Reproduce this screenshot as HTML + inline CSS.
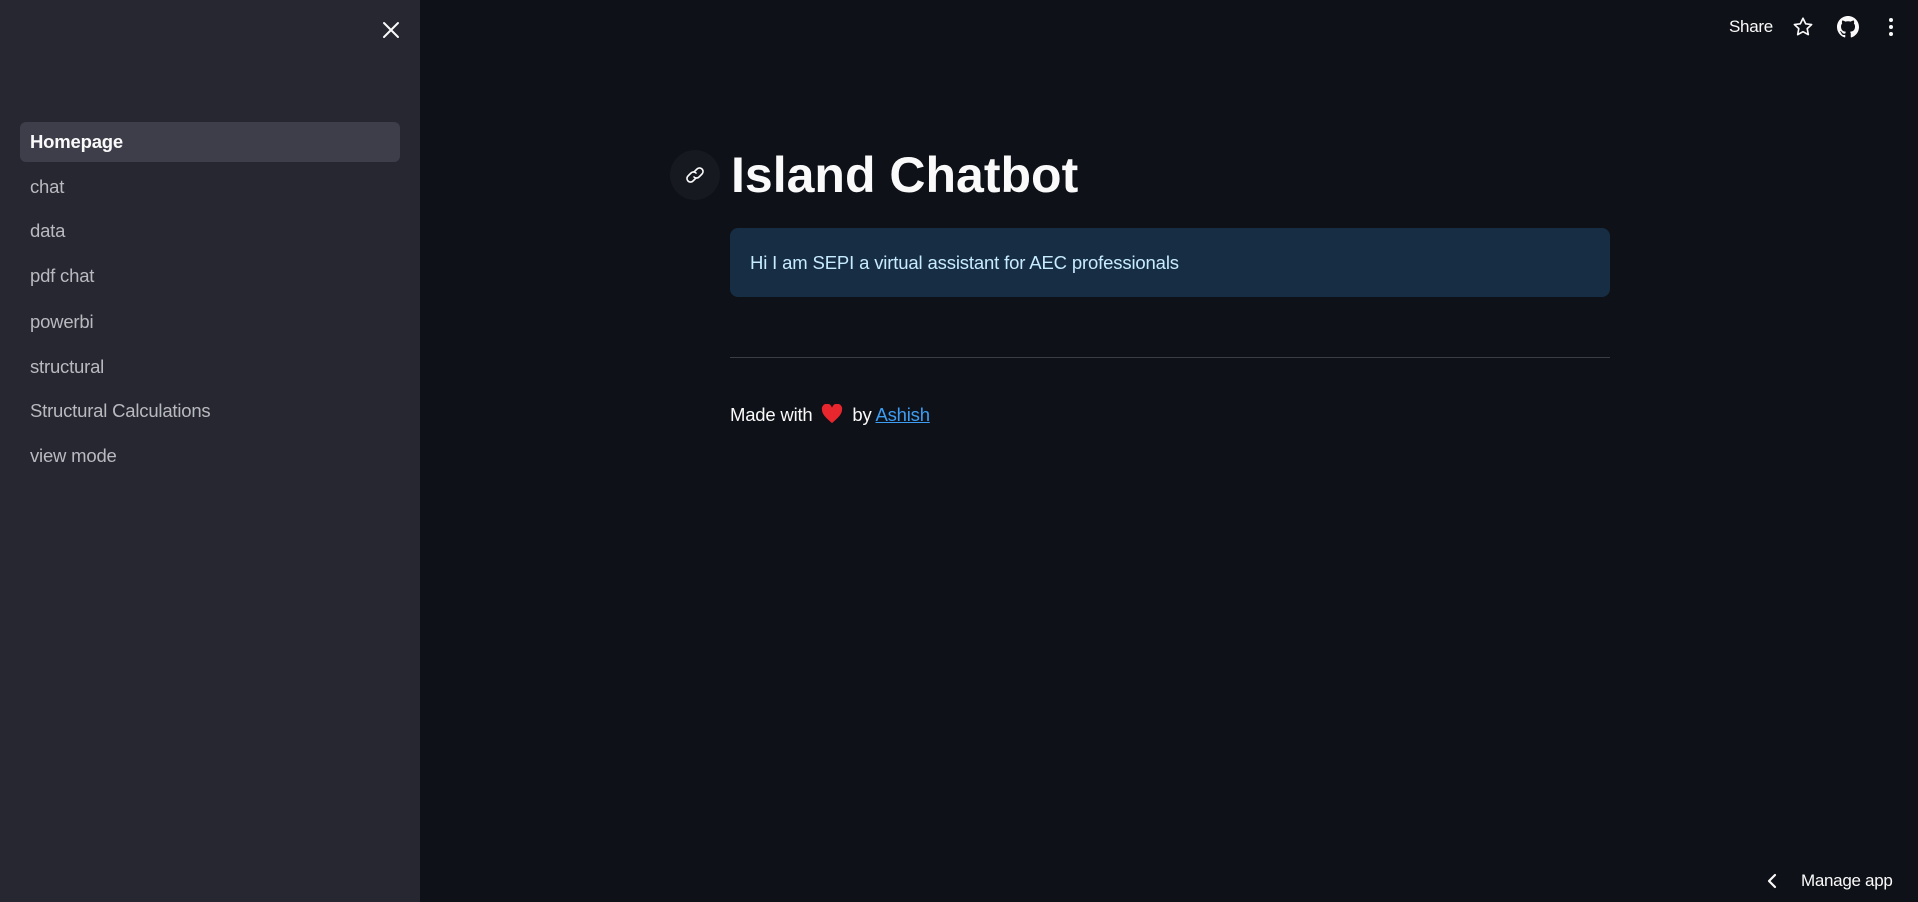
<!DOCTYPE html>
<html><head><meta charset="utf-8"><style>
*{margin:0;padding:0;box-sizing:border-box}
html,body{width:1918px;height:902px;overflow:hidden;background:#0e1117;font-family:"Liberation Sans",sans-serif;color:#fafafa}
#side{position:absolute;left:0;top:0;width:420px;height:902px;background:#262730}
#close{position:absolute;left:381px;top:20px;width:20px;height:20px}
.nav{position:absolute;left:20px;width:380px;height:40px;border-radius:6px;padding-left:10px;line-height:40px;font-size:18.5px;color:#b9bac0;letter-spacing:-0.2px}
.nav.act{background:#3d3e4a;color:#fafafa;font-weight:bold}
#link{position:absolute;left:670px;top:150px;width:50px;height:50px;border-radius:50%;background:#161920}
h1{position:absolute;left:731px;top:142px;font-size:50px;font-weight:bold;letter-spacing:0px;line-height:66px;color:#fafafa}
#info{position:absolute;left:730px;top:228px;width:880px;height:69px;background:#172d43;border-radius:8px;color:#c7ebff;font-size:18.5px;line-height:69px;padding-left:20px;letter-spacing:-0.15px}
#hr{position:absolute;left:730px;top:357px;width:880px;height:1px;background:#3a3d45}
#made{position:absolute;left:730px;top:402px;font-size:18.5px;line-height:26px;letter-spacing:-0.2px}
#made a{color:#3d9df3;text-decoration:underline}
#share{position:absolute;left:1729px;top:16px;font-size:17px;line-height:22px;letter-spacing:-0.3px}
#manage{position:absolute;left:1801px;top:870px;font-size:17px;line-height:22px;letter-spacing:-0.3px}
</style></head><body>
<div id="side">
<svg id="close" viewBox="0 0 20 20"><path d="M3 3L17 17M17 3L3 17" stroke="#fafafa" stroke-width="2" stroke-linecap="round"/></svg>
<div class="nav act" style="top:122px">Homepage</div>
<div class="nav" style="top:167px">chat</div>
<div class="nav" style="top:211px">data</div>
<div class="nav" style="top:256px">pdf chat</div>
<div class="nav" style="top:302px">powerbi</div>
<div class="nav" style="top:347px">structural</div>
<div class="nav" style="top:391px">Structural Calculations</div>
<div class="nav" style="top:436px">view mode</div>
</div>
<div id="link"><svg width="50" height="50" viewBox="0 0 50 50"><g fill="none" stroke="#fafafa" stroke-width="1.6" stroke-linecap="round"><path d="M24 22l3-3a3.5 3.5 0 0 1 5 5l-3 3a3.5 3.5 0 0 1-5 0"/><path d="M26 28l-3 3a3.5 3.5 0 0 1-5-5l3-3a3.5 3.5 0 0 1 5 0"/></g></svg></div>
<h1>Island Chatbot</h1>
<div id="info">Hi I am SEPI a virtual assistant for AEC professionals</div>
<div id="hr"></div>
<div id="made">Made with <svg width="22" height="20" viewBox="0 0 24 22" style="vertical-align:-3px;margin:0 4px"><path d="M12 21C5 15 1 11 1 6.5A5.5 5.5 0 0 1 12 4a5.5 5.5 0 0 1 11 2.5C23 11 19 15 12 21z" fill="#e8262d"/></svg> by <a>Ashish</a></div>
<div id="share">Share</div>
<svg style="position:absolute;left:1792px;top:16px" width="22" height="22" viewBox="0 0 24 24"><path d="M12 2.5l2.9 6 6.5.8-4.8 4.5 1.2 6.5L12 17.1l-5.8 3.2 1.2-6.5L2.6 9.3l6.5-.8z" fill="none" stroke="#fafafa" stroke-width="1.8" stroke-linejoin="round"/></svg>
<svg style="position:absolute;left:1837px;top:16px" width="22" height="22" viewBox="0 0 16 16"><path fill="#fafafa" d="M8 0C3.58 0 0 3.58 0 8c0 3.54 2.290 6.53 5.47 7.59.4.07.55-.17.55-.38 0-.19-.01-.82-.01-1.49-2.01.37-2.530-.49-2.690-.94-.09-.23-.48-.94-.82-1.130-.28-.15-.68-.52-.01-.53.63-.01 1.080.58 1.230.82.72 1.210 1.870.87 2.330.66.07-.52.28-.87.51-1.070-1.780-.2-3.640-.89-3.640-3.950 0-.87.31-1.590.82-2.150-.08-.2-.36-1.020.08-2.120 0 0 .67-.21 2.2.82.64-.18 1.320-.27 2-.27.68 0 1.360.09 2 .27 1.530-1.040 2.2-.82 2.2-.82.44 1.100.16 1.920.08 2.120.51.56.82 1.270.82 2.150 0 3.070-1.870 3.750-3.650 3.950.29.25.54.73.54 1.480 0 1.070-.01 1.930-.01 2.2 0 .21.15.46.55.38A8.013 8.013 0 0016 8c0-4.42-3.58-8-8-8z"/></svg>
<svg style="position:absolute;left:1883px;top:16px" width="16" height="22" viewBox="0 0 16 22"><circle cx="8" cy="4" r="2" fill="#fafafa"/><circle cx="8" cy="11" r="2" fill="#fafafa"/><circle cx="8" cy="18" r="2" fill="#fafafa"/></svg>
<svg style="position:absolute;left:1765px;top:872px" width="14" height="18" viewBox="0 0 14 18"><path d="M10 3L4 9l6 6" fill="none" stroke="#fafafa" stroke-width="2.2" stroke-linecap="round" stroke-linejoin="round"/></svg>
<div id="manage">Manage app</div>
</body></html>
